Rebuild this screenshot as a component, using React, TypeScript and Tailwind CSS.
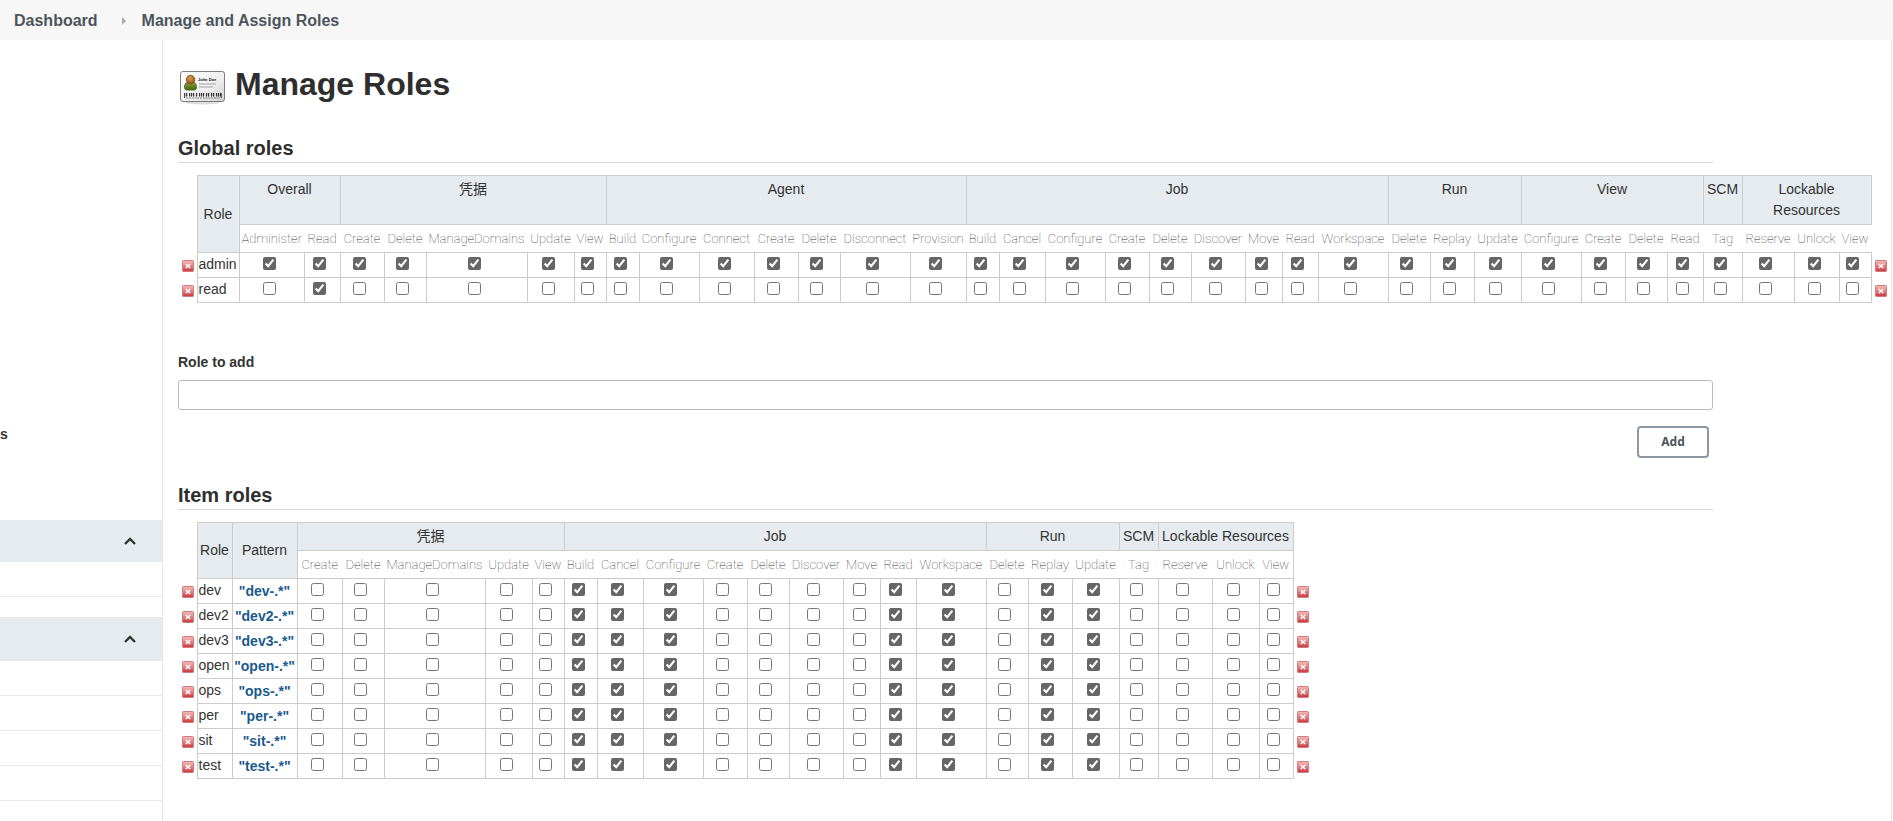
import { useState } from "react";

type Group = { name: string; permissions: string[]; narrow?: boolean };
type RoleRow = { name: string; pattern?: string; granted: string[] };

const COLUMN_WIDTH: Record<string, string> = {
  Administer: "w-[65px]",
  Read: "w-[36px]",
  Create: "w-[44px]",
  Delete: "w-[42px]",
  ManageDomains: "w-[101px]",
  Update: "w-[47px]",
  View: "w-[32px]",
  Build: "w-[33px]",
  Configure: "w-[60px]",
  Connect: "w-[55px]",
  Disconnect: "w-[70px]",
  Provision: "w-[56px]",
  Cancel: "w-[46px]",
  Discover: "w-[54px]",
  Move: "w-[37px]",
  Workspace: "w-[70px]",
  Replay: "w-[44px]",
  Tag: "w-[39px]",
  Reserve: "w-[52px]",
  Unlock: "w-[45px]",
};

const WIDE_LOCK_WIDTH: Record<string, string> = {
  Reserve: "w-[54px]",
  Unlock: "w-[47px]",
  View: "w-[34px]",
};

const CREDENTIALS: Group = {
  name: "凭据",
  permissions: ["Create", "Delete", "ManageDomains", "Update", "View"],
};
const JOB: Group = {
  name: "Job",
  permissions: ["Build", "Cancel", "Configure", "Create", "Delete", "Discover", "Move", "Read", "Workspace"],
};
const RUN: Group = { name: "Run", permissions: ["Delete", "Replay", "Update"] };
const SCM: Group = { name: "SCM", permissions: ["Tag"] };
const LOCKS = ["Reserve", "Unlock", "View"];

const GLOBAL_GROUPS: Group[] = [
  { name: "Overall", permissions: ["Administer", "Read"] },
  CREDENTIALS,
  {
    name: "Agent",
    permissions: ["Build", "Configure", "Connect", "Create", "Delete", "Disconnect", "Provision"],
  },
  JOB,
  RUN,
  { name: "View", permissions: ["Configure", "Create", "Delete", "Read"] },
  SCM,
  { name: "Lockable Resources", permissions: LOCKS, narrow: true },
];

const ITEM_GROUPS: Group[] = [
  CREDENTIALS,
  JOB,
  RUN,
  SCM,
  { name: "Lockable Resources", permissions: LOCKS },
];

const keysOf = (groups: Group[]) =>
  groups.flatMap((g) => g.permissions.map((p) => `${g.name}/${p}`));

const GLOBAL_ROLES: RoleRow[] = [
  { name: "admin", granted: keysOf(GLOBAL_GROUPS) },
  { name: "read", granted: ["Overall/Read"] },
];

const ITEM_GRANTS = [
  "Job/Build",
  "Job/Cancel",
  "Job/Configure",
  "Job/Read",
  "Job/Workspace",
  "Run/Replay",
  "Run/Update",
];

const ITEM_ROLES: RoleRow[] = ["dev", "dev2", "dev3", "open", "ops", "per", "sit", "test"].map(
  (name) => ({ name, pattern: `"${name}-.*"`, granted: ITEM_GRANTS }),
);

function columnWidth(group: Group, permission: string, hasPattern: boolean) {
  if (hasPattern && group.permissions === LOCKS) return WIDE_LOCK_WIDTH[permission];
  if (hasPattern && group === CREDENTIALS && permission === "Create") return "w-[45px]";
  return COLUMN_WIDTH[permission];
}

function DeleteButton({ role }: { role: string }) {
  return (
    <button type="button" aria-label={`Delete ${role}`} className="block">
      <svg width="12" height="12" viewBox="0 0 12 12" className="block">
        <defs>
          <linearGradient id="stop" x1="0" y1="0" x2="0" y2="1">
            <stop offset="0" stopColor="#f2bcbc" />
            <stop offset="0.5" stopColor="#e08486" />
            <stop offset="1" stopColor="#c6343a" />
          </linearGradient>
        </defs>
        <rect x="0.5" y="0.5" width="11" height="11" rx="0.8" fill="url(#stop)" stroke="#d47a7c" />
        <path d="M3.800 4 8.200 8M8.200 4 3.800 8" stroke="#fff" strokeWidth="1.500" />
      </svg>
    </button>
  );
}

function RoleTable({
  caption,
  groups,
  roles,
  headClass,
}: {
  caption: string;
  groups: Group[];
  roles: RoleRow[];
  headClass: string;
}) {
  const hasPattern = roles.some((r) => r.pattern);
  const head = "border border-[#ccc] bg-[#e6ebef] p-0 font-normal";
  const cell = "border border-[#ccc] p-0";
  return (
    <table aria-label={caption} className="w-max border-collapse text-sm leading-[21px]">
      <colgroup>
        <col className="w-[19px]" />
        <col className={hasPattern ? "w-[35px]" : "w-[42px]"} />
        {hasPattern && <col className="w-[65px]" />}
        {groups.flatMap((g) =>
          g.permissions.map((p) => (
            <col key={`${g.name}/${p}`} className={columnWidth(g, p, hasPattern)} />
          )),
        )}
        <col className="w-[18px]" />
      </colgroup>
      <thead>
        <tr className={headClass}>
          <td rowSpan={2} className="p-0" />
          <th rowSpan={2} className={head}>
            Role
          </th>
          {hasPattern && (
            <th rowSpan={2} className={head}>
              Pattern
            </th>
          )}
          {groups.map((g) => (
            <th key={g.name} colSpan={g.permissions.length} className={`${head} pt-[3px] align-top`}>
              <span className={g.narrow ? "mx-auto block w-24" : "block"}>{g.name}</span>
            </th>
          ))}
          <td rowSpan={2} className="p-0" />
        </tr>
        <tr className="h-7">
          {groups.flatMap((g) =>
            g.permissions.map((p) => (
              <th
                key={`${g.name}/${p}`}
                className={`border-y border-[#ccc] p-0 font-['Roboto','Lato',sans-serif] text-[13px] font-thin text-[#333] ${hasPattern ? "last:border-r" : ""}`}
              >
                {p}
              </th>
            )),
          )}
        </tr>
      </thead>
      <tbody>
        {roles.map((role) => (
          <tr key={role.name} className="h-[25px]">
            <td className="p-0 pt-0.5 pl-1">
              <DeleteButton role={role.name} />
            </td>
            <td className={`${cell} pb-0.5 pl-px`}>{role.name}</td>
            {hasPattern && (
              <td className={`${cell} text-center`}>
                <a href="#pattern" className="font-bold text-[#1a5a8e]">
                  {role.pattern}
                </a>
              </td>
            )}
            {groups.flatMap((g) =>
              g.permissions.map((p) => (
                <td key={`${g.name}/${p}`} className={`${cell} pr-[5px] pb-[3px]`}>
                  <input
                    type="checkbox"
                    aria-label={`${role.name}: ${g.name} ${p}`}
                    defaultChecked={role.granted.includes(`${g.name}/${p}`)}
                    className="mx-auto block size-[13px] accent-[#666]"
                  />
                </td>
              )),
            )}
            <td className="p-0 pt-0.5 pl-[3px]">
              <DeleteButton role={role.name} />
            </td>
          </tr>
        ))}
      </tbody>
    </table>
  );
}

function BadgeIcon() {
  const bars = [4, 6, 9, 11, 13, 16, 19, 21, 23, 26, 28, 31, 33, 36, 38, 40];
  return (
    <svg width="48" height="48" viewBox="0 0 48 48" className="shrink-0" aria-hidden="true">
      <defs>
        <linearGradient id="card" x1="0" y1="0" x2="1" y2="1">
          <stop offset="0" stopColor="#ffffff" />
          <stop offset="0.6" stopColor="#eeeeee" />
          <stop offset="1" stopColor="#cfcfcf" />
        </linearGradient>
        <radialGradient id="face" cx="0.45" cy="0.35" r="0.7">
          <stop offset="0" stopColor="#d99a52" />
          <stop offset="1" stopColor="#8f5412" />
        </radialGradient>
        <linearGradient id="coat" x1="0" y1="0" x2="0" y2="1">
          <stop offset="0" stopColor="#84a03a" />
          <stop offset="1" stopColor="#4c6a10" />
        </linearGradient>
      </defs>
      <ellipse cx="24.500" cy="40" rx="18" ry="2.500" fill="#000" opacity="0.14" />
      <rect x="2.500" y="9.500" width="44" height="30" rx="2.500" fill="url(#card)" stroke="#7d7d7d" />
      <path
        d="M6.500 25.500c0-3.500 1.500-5.500 4-5.500h4c2.500 0 4 2 4 5.500 0 1.500-1 2.500-2.500 2.500h-7c-1.500 0-2.500-1-2.500-2.500z"
        fill="url(#coat)"
        stroke="#40590d"
        strokeWidth="0.8"
      />
      <ellipse cx="12.500" cy="17.500" rx="4.200" ry="4.300" fill="url(#face)" stroke="#70410f" strokeWidth="0.7" />
      <text x="20" y="18.500" fontSize="4" fontWeight="700" fontFamily="Liberation Sans, sans-serif" fill="#111">
        John Doe
      </text>
      <path d="M21 22h17M21 25h14" stroke="#bcbcbc" strokeWidth="1.500" />
      {bars.map((x) => (
        <rect key={x} x={x + 2} y="31" width="1.200" height="3.500" fill="#333" />
      ))}
      <path d="M6.600 31v5M43.200 31v5" stroke="#444" />
      <path d="M8 36h34" stroke="#666" strokeWidth="0.8" strokeDasharray="2 0.800" />
    </svg>
  );
}

function Chevron() {
  return (
    <svg width="12" height="8" viewBox="0 0 12 8" aria-hidden="true">
      <path d="M1 7 6 2l5 5" fill="none" stroke="#333" strokeWidth="2.300" />
    </svg>
  );
}

function SidePanel({ title, rows, className }: { title: string; rows: number; className: string }) {
  return (
    <section>
      <button
        type="button"
        aria-label={title}
        className={`flex w-full items-center justify-end bg-[#e6ebef] pr-[26px] ${className}`}
      >
        <Chevron />
      </button>
      {Array.from({ length: rows }, (_, i) => (
        <div key={i} className="h-[35px] border-b border-[#e8e8e8]" />
      ))}
    </section>
  );
}

function SectionTitle({ children }: { children: string }) {
  return (
    <h2 className="border-b border-[#d4d6d8] text-xl leading-7 font-bold text-[#2e2e2e]">{children}</h2>
  );
}

export default function App() {
  const [role, setRole] = useState("");
  return (
    <div className="flex min-h-screen flex-col overflow-x-hidden bg-white font-['Liberation_Sans','Noto_Sans_CJK_SC',sans-serif] text-sm text-[#333]">
      <nav
        aria-label="Breadcrumb"
        className="flex h-10 items-center bg-[#f7f7f7] pt-px pl-3.5 text-base font-bold text-[#4d545d]"
      >
        <a href="#dashboard">Dashboard</a>
        <svg width="4" height="8" viewBox="0 0 4 8" className="mr-4 ml-6" aria-hidden="true">
          <path d="M0 0l4 4-4 4z" fill="#aaa" />
        </svg>
        <a href="#roles">Manage and Assign Roles</a>
      </nav>

      <div className="flex flex-1">
        <aside className="w-[163px] shrink-0 border-r border-[#e4e4e4]">
          <div className="flex h-[480px] items-start pt-[384px] font-bold text-[#333]">
            <a href="#more">s</a>
          </div>
          <SidePanel title="Build queue" rows={1} className="h-[42px]" />
          <div className="h-5" />
          <SidePanel title="Build executors" rows={4} className="h-[44px]" />
        </aside>

        <main className="mr-px min-w-0 flex-1 border-r border-[#e4e4e4] pl-[15px]">
          <div className="mr-[178px]">
            <div className="flex h-[92px] items-center gap-[9px]">
              <BadgeIcon />
              <h1 className="pb-0.5 text-[32px] font-bold text-[#2e2e2e]">Manage Roles</h1>
            </div>
            <div className="pt-0.5">
              <SectionTitle>Global roles</SectionTitle>
            </div>
          </div>

          <div className="pt-3">
            <RoleTable
              caption="Global roles"
              groups={GLOBAL_GROUPS}
              roles={GLOBAL_ROLES}
              headClass="h-[49px]"
            />
          </div>

          <div className="mr-[178px] pt-[49px]">
            <label htmlFor="role" className="block leading-5 font-bold">
              Role to add
            </label>
            <input
              id="role"
              type="text"
              value={role}
              onChange={(e) => setRole(e.target.value)}
              className="mt-2 block h-[30px] w-full rounded-[3px] border border-[#bbb] px-2"
            />
            <div className="flex justify-end pt-4 pr-1">
              <button
                type="button"
                className="h-8 w-[72px] rounded border-2 border-[#8c99a3] font-['Noto_Sans',sans-serif] text-xs font-bold text-[#4d545d]"
              >
                Add
              </button>
            </div>
            <div className="pt-[23px]">
              <SectionTitle>Item roles</SectionTitle>
            </div>
          </div>

          <div className="pt-3">
            <RoleTable caption="Item roles" groups={ITEM_GROUPS} roles={ITEM_ROLES} headClass="h-7" />
          </div>
        </main>
      </div>
    </div>
  );
}
